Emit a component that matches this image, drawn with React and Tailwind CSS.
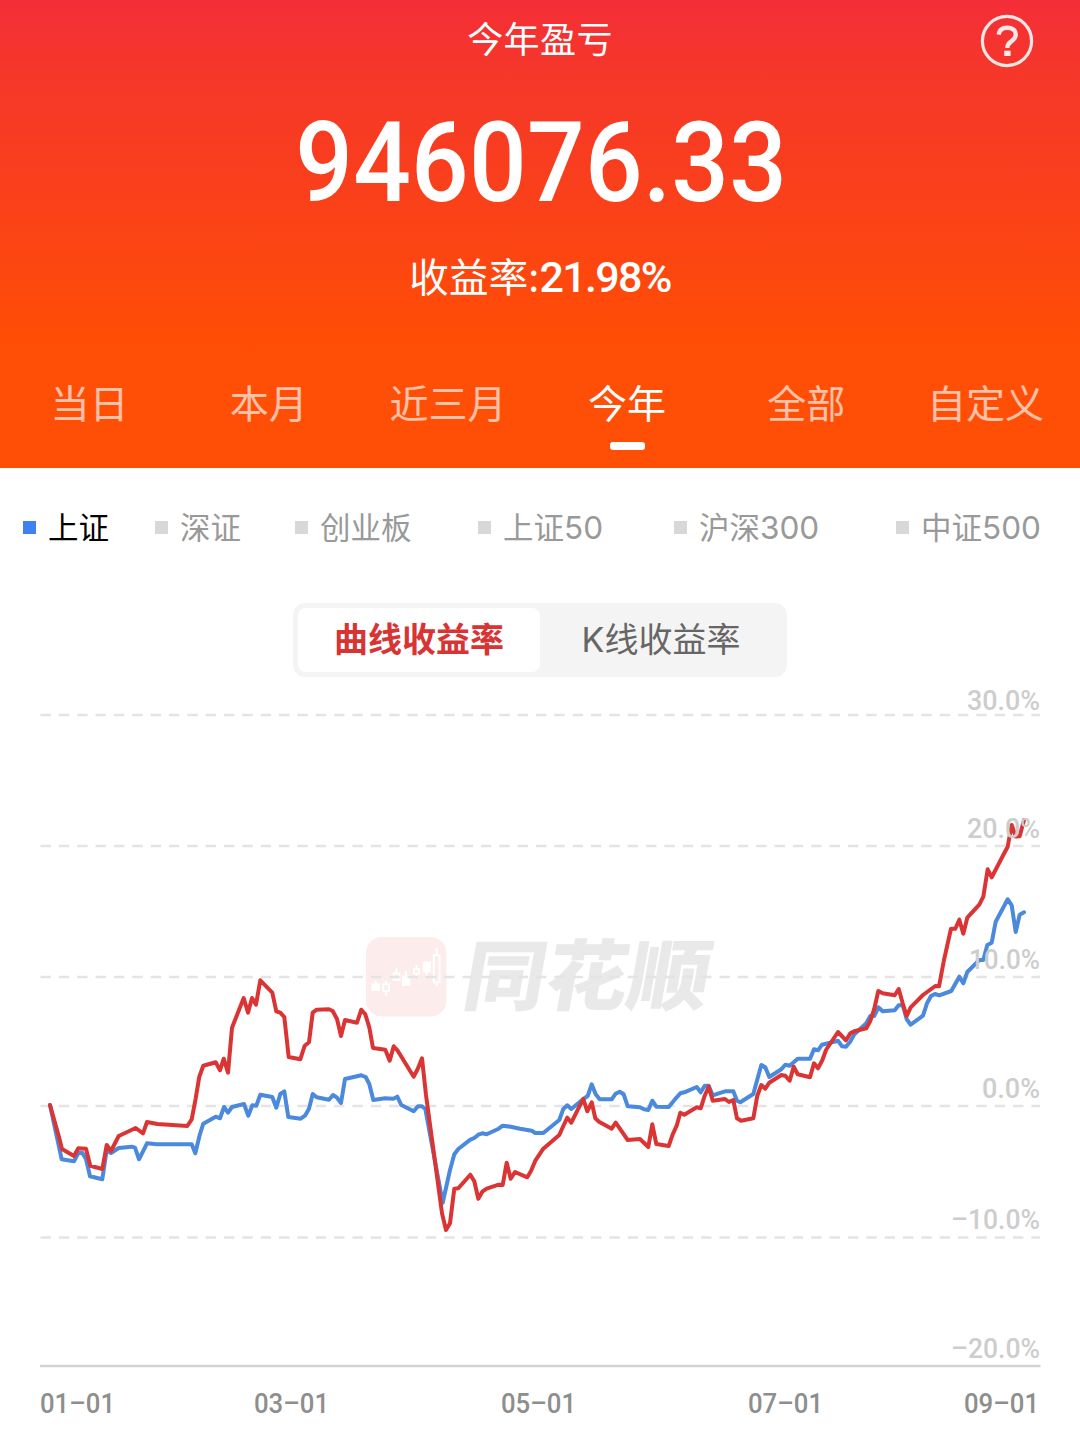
import React, { useState } from 'react';

const PERIODS = ['当日', '本月', '近三月', '今年', '全部', '自定义'];

const INDEXES = [
  { name: '上证', code: '' },
  { name: '深证', code: '' },
  { name: '创业板', code: '' },
  { name: '上证', code: '50' },
  { name: '沪深', code: '300' },
  { name: '中证', code: '500' },
];

const GRID = [
  { y: 715, label: '30.0%', labelY: 710, x: 967 },
  { y: 846, label: '20.0%', labelY: 838, x: 967 },
  { y: 977, label: '10.0%', labelY: 968.5, x: 969 },
  { y: 1106, label: '0.0%', labelY: 1098, x: 982 },
  { y: 1237.5, label: '–10.0%', labelY: 1229, x: 951 },
  { y: 1366, label: '–20.0%', labelY: 1358, x: 951 },
];

const DATES = [
  { x: 40, label: '01–01' },
  { x: 254, label: '03–01' },
  { x: 501, label: '05–01' },
  { x: 748, label: '07–01' },
  { x: 964, label: '09–01' },
];

const ACCOUNT_LINE =
  '50,1105 59,1137 62,1149 74,1156 78.3,1148.3 86,1148.7 90.3,1165.7 102.3,1169 106.7,1145 111,1151 118.7,1136 135.7,1128 143,1133.3 147,1122 157.3,1124 187.3,1126 191.7,1119.3 195.7,1098.3 199.3,1076.7 203.3,1065.7 215.7,1062.3 220,1070.3 223.7,1058.7 228,1072.7 232,1027.7 243.7,998 248,1012.7 252,998 256,1004.7 260.3,980.3 272.3,992.7 276.3,1011.3 280.3,1012.7 284.3,1017 288.7,1057 300.3,1059.3 304.7,1045.7 309,1042.3 312.7,1012.7 316.7,1009.7 329,1009.3 332.7,1011 337,1019 341,1036 345,1020 357,1022.7 361.3,1009.7 365.3,1014.3 369.3,1027.3 373,1048 385.3,1049.7 389.7,1060.7 393.7,1046.3 397.7,1050.7 413.7,1076.7 417.7,1069 422,1058.3 426,1095 442,1213.3 446,1230 450,1223.3 454.3,1188.7 458.3,1188.3 470.3,1174.7 474.3,1181.3 478.3,1198.7 482.3,1191.7 486.7,1188.7 498.7,1184.7 502.7,1185 506.7,1162.7 510.7,1178.7 515,1172 527.3,1177.3 531,1171 535.3,1160.7 543.3,1148.7 559.3,1135 563.3,1126 567.3,1117.7 571.3,1122.7 579.3,1106.7 583.3,1099 587.3,1111.3 591.7,1102.3 595.3,1118.3 599,1121.7 611.7,1128.7 615.7,1122.7 627.7,1140 640,1139 648.3,1147 652.3,1124.3 656.3,1144 668.7,1146 672.7,1134.3 676.7,1125.7 680.3,1112.7 684.3,1114.7 696.7,1107.3 700.7,1108.3 704.7,1095.7 708.7,1086.7 712.7,1100.7 725,1099 729,1102 733.3,1100 737,1118.3 741,1120.7 753.3,1118.3 757.3,1095.7 761.3,1085 765.3,1088.7 769.3,1082.7 781.3,1075 785.3,1075.7 789.7,1080.7 793.7,1066.7 797.7,1074.3 810,1077.3 814,1063.3 818,1068.3 822.3,1060.3 826,1050 838,1032 846,1040.3 850.3,1033.3 854.3,1031.3 866.3,1028.3 870.3,1021 874.3,1008.7 878.3,991 882.7,993.3 894.7,995.3 898.7,989 902.7,1003.3 906.7,1016 910.7,1007.3 923,995 935.3,986 939,986.3 944,960 951,928.7 955.3,928.7 959.3,919.7 963.3,933.7 967.3,917.7 979.3,904.7 983.3,896.7 987.7,869.3 991.7,877.3 1003.7,854.3 1007.7,846.7 1011.7,825 1015.7,836.5 1019.7,836.3 1024,820';

const INDEX_LINE =
  '50,1105 61.7,1159.3 74,1161.3 78.3,1153 82.3,1152.7 86,1159 90,1176.3 102.3,1179.3 106.7,1150 111,1153 118.7,1148 131.7,1146.7 135,1147.7 139,1159.3 147,1143.3 156.7,1144.3 191.7,1144.3 195.3,1153.3 199.7,1135 203.3,1123.7 215.7,1116.7 220,1118.3 224,1107 228,1112.7 232,1107 244,1104 248.3,1115.7 252.3,1105.3 256.3,1105.7 260.3,1094.7 272.3,1097 276.3,1107.7 280.3,1094 284.3,1091.3 288.3,1117 300.7,1118.7 305,1115.7 309,1108.7 312.7,1094 316.7,1097.3 329,1099.7 333,1095 337,1097.7 341,1103 345,1079 361.3,1075.3 365.7,1077 369.3,1084 373.3,1100 385,1098.3 393.3,1098.7 397.3,1096.7 401.3,1105 413.7,1111.3 418,1106.3 422,1106.3 425.3,1109 442.7,1202.7 450,1170 454.3,1154.3 458.3,1149 470.3,1139.7 474.3,1138 478.3,1134.7 482.3,1133.3 486.7,1134.3 498.7,1128.7 502.7,1125.7 510.7,1126.7 520,1128.7 531.7,1130.7 535.3,1133 543.3,1133 559.3,1120 563.3,1109 567.3,1105.3 571.3,1109 583.3,1099 587.7,1096 591.7,1084.3 595.7,1094.3 599.7,1099.3 611.7,1099.3 615.7,1093.7 619.7,1091.7 623.7,1094.3 627.7,1106.3 640,1107.3 644,1109.3 648.3,1110 652.3,1100.7 656.3,1106.7 668.7,1107 676.7,1097.3 680.3,1093.3 684.3,1092.3 696.7,1087 700.7,1092.3 704.7,1085.7 708.7,1085.7 712.7,1095.3 725,1091.3 733.3,1091.3 737,1100.7 740.3,1102.3 753.3,1094 761.3,1065 765.3,1067.3 769.3,1077 781.3,1069.3 785.3,1064.7 789.7,1065.7 797.7,1058.7 810,1058.7 814,1049.3 818,1050.3 822,1044.7 838,1040.7 842,1046.3 846,1046.7 850,1042 854.3,1034.3 866.3,1023.3 870.3,1016 874.3,1016 878.3,1007.3 882.7,1011.3 894.7,1010.3 898.7,1005.3 902.7,1005 906.7,1019.3 910.7,1024.7 923,1015.7 927,1003.3 931,996 935,994 939.3,995.3 951.3,991 959.3,976.7 963.3,983.3 967.3,972 979.3,960 983.3,960 987.3,945 991.7,942.7 995.7,921.7 1007.7,899.3 1011.7,905.3 1015.7,932 1019.7,914.7 1024,912.3';

const Watermark = () => (
  <g>
    <rect x="366" y="937" width="80.5" height="79.5" rx="16" fill="#fdecec" />
    {/* candlesticks */}
    <g fill="none" stroke="#fff" strokeWidth="2">
      <path d="M375.7 981v4M386 981v4M386 992v4M396.5 968v6M406 971v5M416.5 965v4M416.5 974v4M426.5 972v4M436.7 948v7M436.7 982v4" />
      <rect x="383.3" y="984.3" width="5.6" height="6.8" />
      <rect x="393.6" y="973.6" width="5.8" height="6.2" />
      <rect x="414" y="969" width="5" height="4.6" />
      <rect x="433.8" y="955.3" width="5.8" height="27" />
      <path d="M371.4 983.6h8.6v7.4h-8.6zM402 975.6h8.4v10.4h-8.4zM422.8 961.4h8.2v11h-8.2z" fill="#fff" stroke="none" />
    </g>
    <text
      transform="translate(460 1003.5) skewX(-10)"
      textLength="246"
      lengthAdjust="spacingAndGlyphs"
      fill="#e9e9e9"
      className="font-['Noto_Sans_CJK_SC',sans-serif] text-[77px] font-black"
    >
      同花顺
    </text>
  </g>
);

const YieldChart = () => (
  <svg className="block h-[772px] w-[1080px]" viewBox="0 677 1080 772">
    <Watermark />
    {GRID.slice(0, 5).map((g) => (
      <path key={g.y} d={`M40.5 ${g.y}H1040`} stroke="#e4e4e4" strokeWidth="2.4" strokeDasharray="10.4 7.95" />
    ))}
    <path d="M40 1366H1040.5" stroke="#d2d2d2" strokeWidth="2.4" />

    <g fill="none" strokeWidth="4" strokeLinejoin="round" strokeLinecap="round">
      <polyline points={INDEX_LINE} stroke="#4a89dc" />
      <polyline points={ACCOUNT_LINE} stroke="#db3434" />
    </g>

    <g className="font-['Roboto',sans-serif] text-[28.5px] font-medium">
      {GRID.map((g) => (
        <text key={g.label} x={g.x} y={g.labelY} textLength={1040 - g.x} lengthAdjust="spacingAndGlyphs" fill="#cdcdcd">
          {g.label}
        </text>
      ))}
      {DATES.map((d) => (
        <text key={d.label} x={d.x} y="1412.5" textLength="75" lengthAdjust="spacingAndGlyphs" fill="#8e8e8e">
          {d.label}
        </text>
      ))}
    </g>
  </svg>
);

const App = () => {
  const [period, setPeriod] = useState(3);
  const [index, setIndex] = useState(0);

  return (
    <div className="h-[1449px] w-[1080px] overflow-hidden bg-white font-['Noto_Sans_CJK_SC',sans-serif]">
      <header className="relative flex h-[468px] flex-col items-center bg-[linear-gradient(to_bottom,#f42e38_0%,#f5362b_14%,#fa4119_44%,#ff4b08_68%,#ff4e05_76%)] text-white">
        <h1 className="mt-[13px] h-[48px] text-[36px] leading-[48px] tracking-[0.4px]">今年盈亏</h1>
        <button className="absolute top-[14px] right-[46px]" aria-label="help">
          <svg className="size-[54px]" viewBox="0 0 54 54" fill="none" stroke="#fff" strokeOpacity="0.88">
            <circle cx="27" cy="27" r="24.6" strokeWidth="3.2" />
            <path d="M18.6 20.6c.6-4.4 3.8-6.8 8.6-6.8 5 0 8.6 2.5 8.6 6.7 0 3.1-1.7 4.9-4.5 6.9-2.9 2-4 3.3-4 6.6" strokeWidth="4.4" />
            <path d="M24.2 36.7h6.4v5.3h-6.4z" fill="#fff" fillOpacity="0.9" stroke="none" />
          </svg>
        </button>
        <div className="mt-[37px] h-[130px] scale-x-[0.91] pl-[2px] font-['Roboto',sans-serif] text-[111.5px] leading-[130px] font-medium tracking-[0.3px]">
          946076.33
        </div>
        <div className="mt-[22px] flex h-[54px] items-center text-[39.5px] leading-[54px]">
          <span className="-mt-[4px] tracking-[0.2px]">收益率:</span>
          <span className="font-['Roboto',sans-serif] text-[43px] font-medium tracking-[-1.7px]">21.98%</span>
        </div>
        <nav className="mt-[69px] grid w-[1075px] grid-cols-6 self-start">
          {PERIODS.map((p, i) => (
            <button key={p} onClick={() => setPeriod(i)} className="flex flex-col items-center">
              <span className={`text-[39px] leading-[56px] ${i === period ? 'text-white' : 'text-white/65'}`}>{p}</span>
              {i === period && <span className="mt-[13px] h-[8px] w-[35px] rounded-[3px] bg-white" />}
            </button>
          ))}
        </nav>
      </header>

      <div className="mt-[30px] grid h-[59px] grid-cols-[132px_140px_183px_196px_222px_auto] items-center pl-[23px]">
        {INDEXES.map((item, i) => (
          <button key={item.name + item.code} onClick={() => setIndex(i)} className="flex items-center gap-[12px]">
            <span className={`size-[13px] ${i === index ? 'bg-[#4180f2]' : 'bg-[#d8d8d8]'}`} />
            <span className={`flex items-center text-[30.5px] leading-[44px] ${i === index ? 'text-black' : 'text-[#999]'}`}>
              <span className="-mt-[3px]">{item.name}</span>
              <span className="font-['Inter',sans-serif] text-[31.5px]">{item.code}</span>
            </span>
          </button>
        ))}
      </div>

      <div className="mx-auto mt-[46px] flex h-[74px] w-[494px] rounded-[12px] bg-[#f4f4f4] p-[5px] text-[34px]">
        <button className="w-[242px] rounded-[8px] bg-white pb-[4px] leading-[60px] font-bold text-[#d93434]">曲线收益率</button>
        <button className="flex-1 pb-[3px] leading-[60px] text-[#666]">
          <span className="font-['Inter',sans-serif]">K</span>线收益率
        </button>
      </div>

      <YieldChart />
    </div>
  );
};

export default App;
